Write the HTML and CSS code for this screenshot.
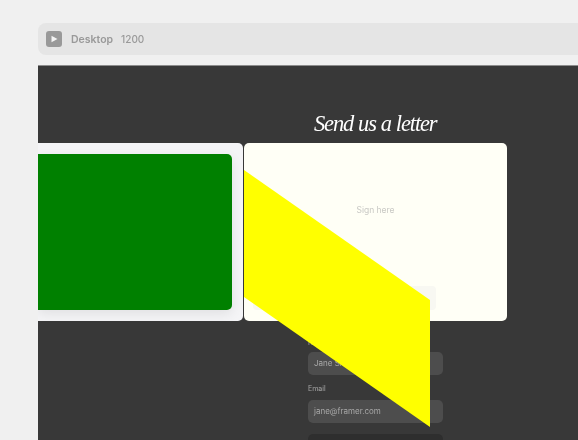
FILE: index.html
```html
<!DOCTYPE html>
<html lang="en">
<head>
<meta charset="utf-8">
<title>Desktop 1200</title>
<link rel="stylesheet" href="styles.css">
</head>
<body>
<main class="canvas">
  <header class="toolbar">
    <span class="play">
      <svg viewBox="0 0 16 16" width="16" height="16"><path d="M5.5 4.8 L11.5 8 L5.5 11.2 Z" fill="#f4f4f4"/></svg>
    </span>
    <span class="name">Desktop</span>
    <span class="size">1200</span>
  </header>
  <section class="frame">
    <h1 class="title">Send us a letter</h1>
    <form class="form">
      <label class="label">Name</label>
      <div class="input">Jane Smith</div>
      <label class="label email">Email</label>
      <div class="input">jane@framer.com</div>
      <div class="submit"></div>
    </form>
    <div class="cards">
      <div class="card-left"><div class="green"></div></div>
      <div class="card-right">
        <span class="sign">Sign here</span>
        <div class="ghost"></div>
      </div>
    </div>
    <svg class="ribbon" viewBox="0 0 186 257" width="186" height="257"><polygon points="0,0 186,130 186,257 0,127" fill="#ffff00"/></svg>
  </section>
</main>
</body>
</html>
```

FILE: styles.css
```css
* { box-sizing: border-box; }
html, body { margin: 0; height: 100%; }
body {
  width: 578px;
  height: 440px;
  overflow: hidden;
  background: #f0f0f0;
  font-family: Inter, "Liberation Sans", sans-serif;
}
.canvas {
  width: 540px;
  height: 440px;
  overflow: hidden;
  margin-left: 38px;
  padding-top: 23px;
  display: flex;
  flex-direction: column;
  gap: 10px;
}
.toolbar {
  flex: none;
  width: 675px;
  height: 32px;
  border-radius: 8px;
  background: #e5e5e5;
  display: flex;
  align-items: center;
  padding-left: 8px;
  font-size: 10.5px;
  font-weight: 500;
  color: #999;
  will-change: transform;
}
.play {
  width: 16px;
  height: 16px;
  border-radius: 3px;
  background: #999;
  display: flex;
  margin-right: 9px;
}
.name { margin-right: 8px; font-weight: 600; }
.size { font-size: 10px; }
.frame {
  position: relative;
  flex: none;
  width: 675px;
  height: 375px;
  background: #383838;
  border-top: 1px solid #8c8c8c;
  display: flex;
  flex-direction: column;
  align-items: center;
}
.title {
  margin: 43px 0 0;
  font-family: "Liberation Serif", serif;
  font-style: italic;
  font-weight: 400;
  font-size: 22.5px;
  letter-spacing: -1.15px;
  word-spacing: 0.5px;
  line-height: 29px;
  color: #fff;
  will-change: transform;
}
.form {
  width: 135px;
  margin-top: 200px;
  display: flex;
  flex-direction: column;
  will-change: transform;
}
.label {
  font-size: 7px;
  line-height: 10px;
  color: #a5a5a5;
  margin-bottom: 4px;
}
.email { margin-top: 9px; margin-bottom: 6px; }
.input {
  height: 23px;
  border-radius: 5px;
  background: #4d4d4d;
  padding-left: 6px;
  font-size: 8px;
  line-height: 23px;
  color: #a8a8a8;
}
.submit {
  height: 23px;
  margin-top: 11px;
  border-radius: 5px;
  background: #2e2e2e;
}
.cards {
  position: absolute;
  left: 0;
  top: 77px;
  display: flex;
  gap: 1px;
  height: 178px;
}
.card-left {
  width: 205px;
  padding: 11px 11px 11px 0;
  background: #f4f4f6;
  border-radius: 0 5px 5px 0;
}
.green {
  height: 156px;
  background: #008000;
  border-radius: 0 5px 5px 0;
  box-shadow: 0 4px 12px rgba(0, 0, 0, .08);
}
.card-right {
  position: relative;
  width: 263px;
  background: #fffff6;
  border-radius: 5px;
  display: flex;
  justify-content: center;
  padding-top: 61px;
  will-change: transform;
}
.sign {
  font-size: 8.5px;
  line-height: 12px;
  color: #c9c9c5;
}
.ghost {
  position: absolute;
  left: 9px;
  top: 143px;
  width: 183px;
  height: 24px;
  background: #f8f8f2;
  border-radius: 4px;
}
.ribbon {
  position: absolute;
  left: 206px;
  top: 104px;
}
```
